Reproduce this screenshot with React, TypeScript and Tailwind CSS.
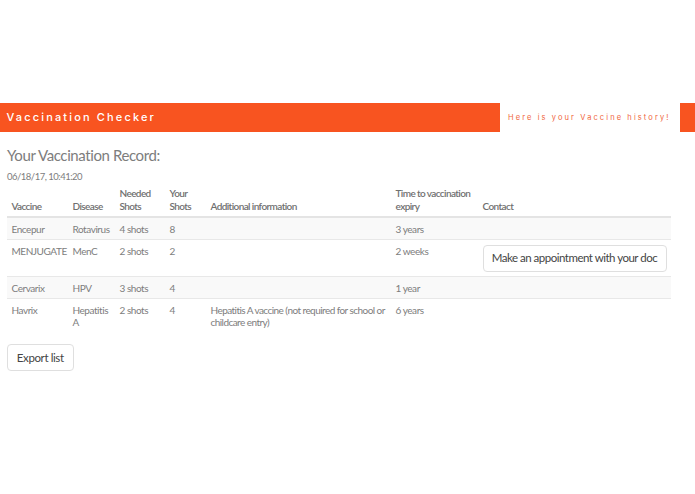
const rows = [
  { vaccine: 'Encepur', disease: 'Rotavirus', needed: '4 shots', yours: '8', info: '', expiry: '3 years', contact: false },
  { vaccine: 'MENJUGATE', disease: 'MenC', needed: '2 shots', yours: '2', info: '', expiry: '2 weeks', contact: true },
  { vaccine: 'Cervarix', disease: 'HPV', needed: '3 shots', yours: '4', info: '', expiry: '1 year', contact: false },
  {
    vaccine: 'Havrix',
    disease: 'Hepatitis A',
    needed: '2 shots',
    yours: '4',
    info: 'Hepatitis A vaccine (not required for school or childcare entry)',
    expiry: '6 years',
    contact: false,
  },
];

export default function App() {
  return (
    <div className="h-[494px] overflow-hidden bg-white pt-[103px] font-['Lato',sans-serif] text-[#7d7d7d]">
      {/* Header bar */}
      <div className="flex h-[29px] items-stretch">
        <div className="flex w-[500px] items-center bg-[#f85420] pl-[6.5px] font-['Inter',sans-serif] text-[11px] font-medium tracking-[2.15px] text-white">
          Vaccination Checker
        </div>
        <div className="flex w-[180px] items-center pl-[8px] font-['Inter',sans-serif] text-[7.5px] tracking-[2.1px] text-[#f0663c]">
          Here is your Vaccine history!
        </div>
        <div className="flex-1 bg-[#f85420]" />
      </div>

      <div className="px-[7px]">
        <h1 className="mt-[11px] text-[15px] leading-[24px] tracking-[-0.4px] text-[#7d7d7d]">Your Vaccination Record:</h1>
        <p className="mt-[3px] text-[9.5px] leading-[13px] tracking-[-0.5px]">06/18/17, 10:41:20</p>

        <table className="mt-[1px] w-[664px] table-fixed border-collapse text-[10px] leading-[12.5px] tracking-[-0.45px]">
          <colgroup>
            <col className="w-[61px]" />
            <col className="w-[47px]" />
            <col className="w-[50px]" />
            <col className="w-[41px]" />
            <col className="w-[185px]" />
            <col className="w-[87px]" />
            <col className="w-[193px]" />
          </colgroup>
          <thead>
            <tr className="border-b-2 border-[#e4e4e4] text-left align-bottom text-[#707070]">
              <th className="px-[4.5px] pt-[3px] pb-[4px] font-semibold tracking-[-0.6px]">Vaccine</th>
              <th className="px-[4.5px] pt-[3px] pb-[4px] font-semibold tracking-[-0.6px]">Disease</th>
              <th className="px-[4.5px] pt-[3px] pb-[4px] font-semibold tracking-[-0.6px]">Needed Shots</th>
              <th className="px-[4.5px] pt-[3px] pb-[4px] font-semibold tracking-[-0.6px]">Your Shots</th>
              <th className="px-[4.5px] pt-[3px] pb-[4px] font-semibold tracking-[-0.6px]">Additional information</th>
              <th className="px-[4.5px] pt-[3px] pb-[4px] font-semibold tracking-[-0.6px]">Time to vaccination expiry</th>
              <th className="px-[4.5px] pt-[3px] pb-[4px] font-semibold tracking-[-0.6px]">Contact</th>
            </tr>
          </thead>
          <tbody>
            {rows.map((r, i) => (
              <tr
                key={r.vaccine}
                className={`align-top ${i < 3 ? 'border-b border-[#e8e8e8]' : ''} ${i % 2 === 0 ? 'bg-[#f9f9f9]' : 'bg-white'}`}
              >
                <td className="px-[4.5px] pt-[5px] pb-[3.5px]">{r.vaccine}</td>
                <td className="px-[4.5px] pt-[5px] pb-[3.5px]">{r.disease}</td>
                <td className="px-[4.5px] pt-[5px] pb-[3.5px]">{r.needed}</td>
                <td className="px-[4.5px] pt-[5px] pb-[3.5px]">{r.yours}</td>
                <td className="pt-[5px] pb-[3.5px] pl-[4.5px] tracking-[-0.55px]">{r.info}</td>
                <td className="px-[4.5px] pt-[5px] pb-[3.5px]">{r.expiry}</td>
                <td className="px-[4.5px] pt-[5px] pb-[3.5px]">
                  {r.contact && (
                    <button className="block h-[27px] w-[184px] whitespace-nowrap rounded-[4px] border border-[#dfdfdf] bg-white text-center text-[11.5px] tracking-[-0.5px] text-[#444]">
                      Make an appointment with your doc
                    </button>
                  )}
                </td>
              </tr>
            ))}
          </tbody>
        </table>

        <button className="mt-[12px] h-[27px] w-[66.5px] rounded-[4px] border border-[#dfdfdf] bg-white text-[11.5px] tracking-[-0.4px] text-[#444]">
          Export list
        </button>
      </div>
    </div>
  );
}
